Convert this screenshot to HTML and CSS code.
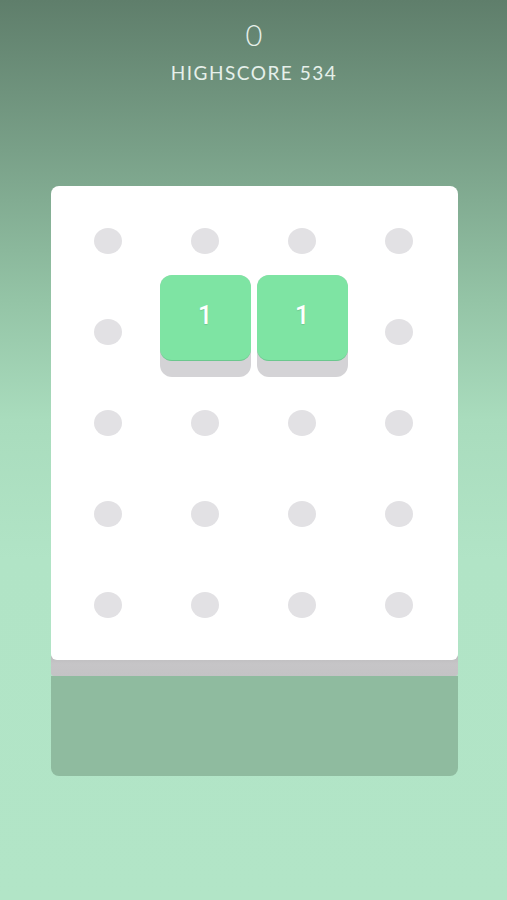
FILE: index.html
```html
<!DOCTYPE html>
<html>
<head>
<meta charset="utf-8">
<link rel="stylesheet" href="styles.css">
</head>
<body>
<div class="screen">
  <header class="header">
    <div class="score">0</div>
    <div class="highscore">HIGHSCORE 534</div>
  </header>
  <div class="board">
    <div class="face">
      <div class="cell"><span class="dot"></span></div>
      <div class="cell"><span class="dot"></span></div>
      <div class="cell"><span class="dot"></span></div>
      <div class="cell"><span class="dot"></span></div>

      <div class="cell"><span class="dot"></span></div>
      <div class="cell"><div class="tile"><div class="tile-top">1</div></div></div>
      <div class="cell"><div class="tile"><div class="tile-top">1</div></div></div>
      <div class="cell"><span class="dot"></span></div>

      <div class="cell"><span class="dot"></span></div>
      <div class="cell"><span class="dot"></span></div>
      <div class="cell"><span class="dot"></span></div>
      <div class="cell"><span class="dot"></span></div>

      <div class="cell"><span class="dot"></span></div>
      <div class="cell"><span class="dot"></span></div>
      <div class="cell"><span class="dot"></span></div>
      <div class="cell"><span class="dot"></span></div>

      <div class="cell"><span class="dot"></span></div>
      <div class="cell"><span class="dot"></span></div>
      <div class="cell"><span class="dot"></span></div>
      <div class="cell"><span class="dot"></span></div>
    </div>
    <div class="lip"></div>
    <div class="shade"></div>
  </div>
</div>
</body>
</html>
```

FILE: styles.css
```css
html, body {
  margin: 0;
  padding: 0;
}
body {
  width: 507px;
  height: 900px;
  overflow: hidden;
  background: linear-gradient(180deg, #5f7e6b 0px, #79a088 150px, #94c4a6 300px, #a9dcbd 420px, #b1e4c6 560px, #b2e5c7 900px);
  font-family: "Lato", "Open Sans", sans-serif;
}
.screen {
  display: flex;
  flex-direction: column;
  align-items: center;
}
.header {
  display: flex;
  flex-direction: column;
  align-items: center;
  padding-top: 19px;
  padding-left: 1px;
  color: #e6f0ea;
}
.score {
  font-size: 29px;
  font-weight: 300;
  line-height: 32px;
}
.highscore {
  margin-top: 10px;
  font-size: 19px;
  font-weight: 400;
  letter-spacing: 1.5px;
  line-height: 24px;
}
.board {
  margin-top: 101px;
  margin-left: 1px;
  width: 407px;
  display: flex;
  flex-direction: column;
}
.face {
  background: #ffffff;
  border-radius: 8px 8px 6px 6px;
  padding: 9px 10px 10px 9px;
  display: grid;
  grid-template-columns: repeat(4, 97px);
  grid-template-rows: repeat(5, 91px);
  position: relative;
  z-index: 1;
}
.cell {
  display: flex;
  align-items: center;
  justify-content: center;
}
.dot {
  width: 28px;
  height: 26px;
  border-radius: 50%;
  background: #e2e1e4;
}
.tile {
  align-self: flex-start;
  margin-top: -11px;
  width: 91px;
  height: 102px;
  border-radius: 12px;
  background: #d4d3d6;
  display: flex;
  flex-direction: column;
}
.tile-top {
  height: 86px;
  padding-bottom: 5px;
  border-radius: 12px;
  background: #7ee4a3;
  border-bottom: 1px solid #6cc78e;
  box-sizing: border-box;
  display: flex;
  align-items: center;
  justify-content: center;
  color: #ffffff;
  font-family: "Roboto", "Open Sans", sans-serif;
  font-size: 25px;
  font-weight: 500;
  text-shadow: 0 1px 1px rgba(0,0,0,0.12);
}
.lip {
  height: 20px;
  margin-top: -4px;
  background: linear-gradient(180deg, #bdbcbe 0px, #c6c5c7 8px, #c4c3c5 20px);
  border-radius: 0 0 3px 3px;
}
.shade {
  height: 100px;
  background: #8fbb9f;
  border-radius: 0 0 8px 8px;
}
```
